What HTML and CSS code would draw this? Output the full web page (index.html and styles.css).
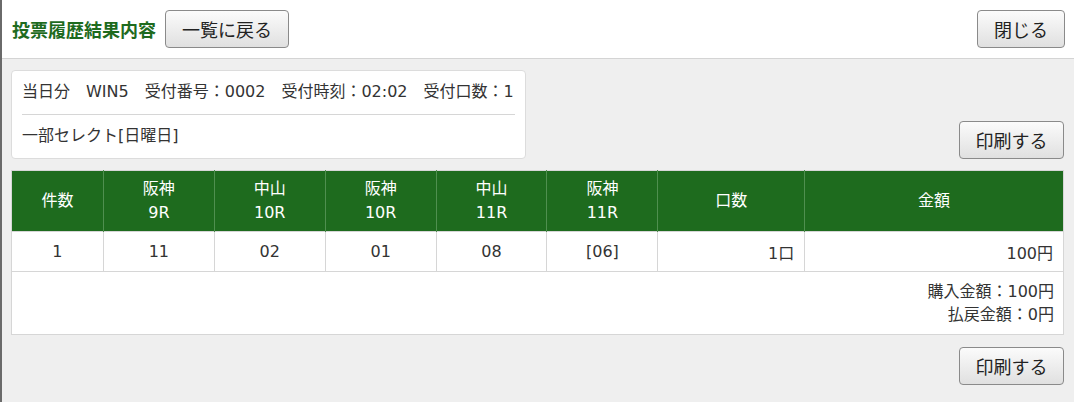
FILE: index.html
```html
<!DOCTYPE html>
<html lang="ja">
<head>
<meta charset="utf-8">
<link rel="stylesheet" href="styles.css">
</head>
<body>
<div class="page">
  <header class="top">
    <div class="top-left">
      <h1 class="title">投票履歴結果内容</h1>
      <button class="btn btn-back">一覧に戻る</button>
    </div>
    <button class="btn btn-close">閉じる</button>
  </header>
  <main class="main">
    <div class="summary-row">
      <div class="info-card">
        <div class="info-line">当日分<span class="gap"></span>WIN5<span class="gap"></span>受付番号：0002<span class="gap"></span>受付時刻：02:02<span class="gap"></span>受付口数：1</div>
        <div class="info-line info-sub">一部セレクト[日曜日]</div>
      </div>
      <button class="btn btn-print">印刷する</button>
    </div>
    <table class="result">
      <colgroup>
        <col class="w-count"><col class="w-race"><col class="w-race"><col class="w-race"><col class="w-race"><col class="w-race"><col class="w-units"><col class="w-amount">
      </colgroup>
      <thead>
        <tr>
          <th>件数</th>
          <th>阪神<br>9R</th>
          <th>中山<br>10R</th>
          <th>阪神<br>10R</th>
          <th>中山<br>11R</th>
          <th>阪神<br>11R</th>
          <th>口数</th>
          <th>金額</th>
        </tr>
      </thead>
      <tbody>
        <tr class="data">
          <td>1</td>
          <td>11</td>
          <td>02</td>
          <td>01</td>
          <td>08</td>
          <td>[06]</td>
          <td class="num">1口</td>
          <td class="num">100円</td>
        </tr>
        <tr class="totals">
          <td colspan="8">
            <div>購入金額：100円</div>
            <div>払戻金額：0円</div>
          </td>
        </tr>
      </tbody>
    </table>
    <div class="bottom-row">
      <button class="btn btn-print">印刷する</button>
    </div>
  </main>
</div>
</body>
</html>
```

FILE: styles.css
```css
* { box-sizing: border-box; }
html, body {
  margin: 0;
  padding: 0;
  background: #efefef;
}
body {
  font-family: "DejaVu Sans", "Noto Sans CJK JP", sans-serif;
  color: #333;
  font-size: 16px;
}
.page {
  border-left: 2px solid #6a6a6a;
  min-height: 402px;
}
.top {
  display: flex;
  justify-content: space-between;
  align-items: center;
  height: 59px;
  padding: 0 9px 0 10px;
  background: #fff;
  border-bottom: 1px solid #d4d4d4;
}
.top-left {
  display: flex;
  align-items: center;
  gap: 9px;
}
.title {
  margin: 0;
  font-size: 18px;
  font-weight: bold;
  color: #1e6b1e;
}
.btn {
  height: 38px;
  border: 1px solid #8a8a8a;
  border-radius: 4px;
  background: linear-gradient(#fbfbfb, #e0e0e0);
  font-family: inherit;
  font-size: 18px;
  color: #222;
  padding: 0;
}
.btn-back { width: 124px; }
.btn-close { width: 88px; }
.btn-print { width: 105px; }
.main {
  padding: 11px 10px 10px 9px;
}
.summary-row {
  display: flex;
  justify-content: space-between;
  align-items: flex-end;
}
.info-card {
  width: 515px;
  background: #fff;
  border: 1px solid #dcdcdc;
  border-radius: 4px;
  padding: 0 10px;
}
.info-line {
  line-height: 24px;
  padding: 9px 0 10px;
  white-space: nowrap;
}
.info-sub {
  border-top: 1px solid #d6d6d6;
  padding: 9px 0 10px;
}
.gap {
  display: inline-block;
  width: 16px;
}
.result {
  width: 1053px;
  margin-top: 11px;
  border-collapse: collapse;
  background: #fff;
  border: 1px solid #d6d6d6;
}
.w-count { width: 92px; }
.w-race { width: 111px; }
.w-units { width: 147px; }
.w-amount { width: 259px; }
.result th {
  background: #1e6b1e;
  color: #fff;
  font-weight: normal;
  height: 61px;
  line-height: 24px;
  text-align: center;
  border-left: 1px solid #4f8f4f;
  padding: 0;
}
.result th:first-child { border-left: none; }
.result .data td {
  height: 40px;
  text-align: center;
  border: 1px solid #d6d6d6;
  padding: 0 10px;
}
.result .data td.num { text-align: right; }
.result .totals td {
  height: 63px;
  text-align: right;
  padding: 7px 9px 8px;
  line-height: 23px;
  border-top: 1px solid #d6d6d6;
}
.bottom-row {
  display: flex;
  justify-content: flex-end;
  margin-top: 12px;
}
```
